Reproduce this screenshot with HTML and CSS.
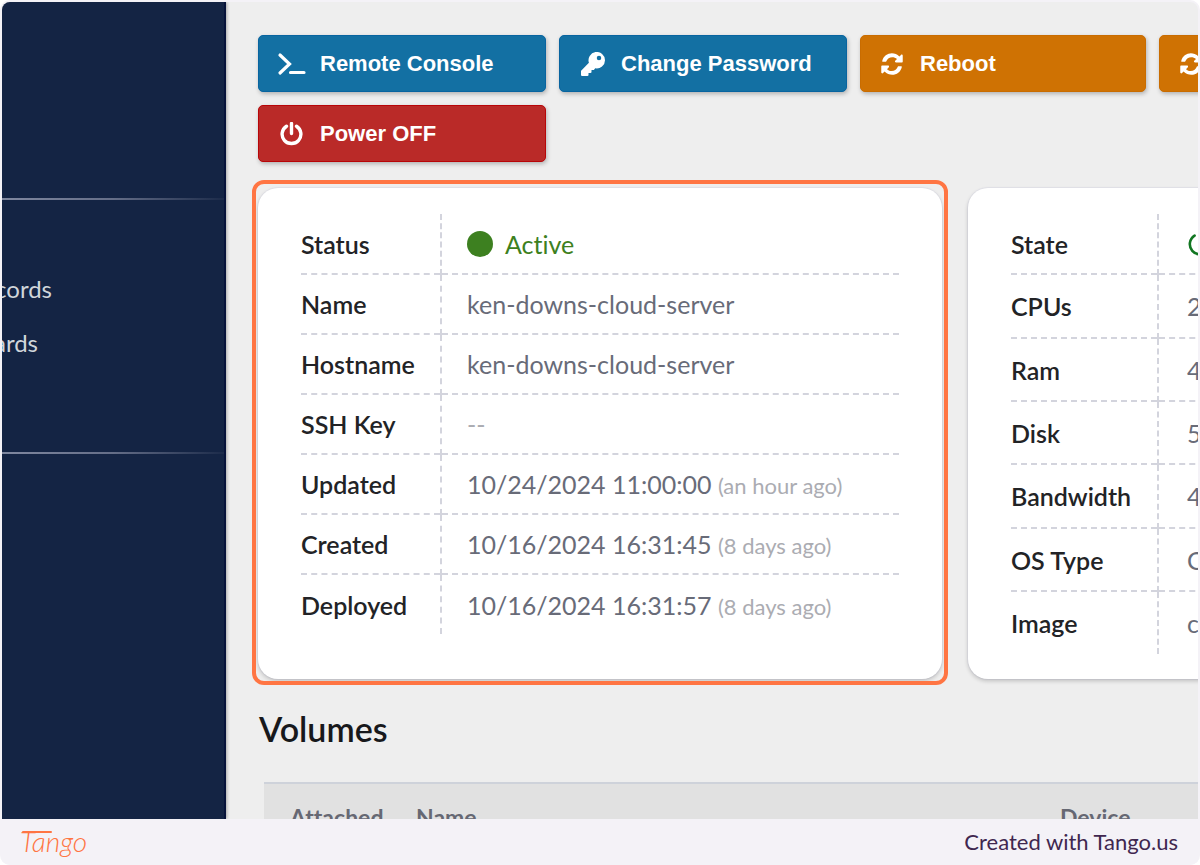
FILE: index.html
```html
<!DOCTYPE html>
<html lang="en">
<head>
<meta charset="utf-8">
<title>Cloud Server</title>
<link rel="stylesheet" href="styles.css">
</head>
<body>
<svg class="defs" aria-hidden="true">
  <symbol id="terminal" viewBox="0 0 24 24" overflow="visible"><path d="M0 3l9.500 9L0 21M10.500 20.500h13.500" fill="none" stroke="currentColor" stroke-width="3.200" stroke-linecap="round" stroke-linejoin="miter"/></symbol>
  <symbol id="key" viewBox="0 0 512 512"><path fill="currentColor" d="M512 176a176 176 0 0 1-209 173l-24 27a24 24 0 0 1-18 8h-37v40a24 24 0 0 1-24 24h-40v40a24 24 0 0 1-24 24H24a24 24 0 0 1-24-24v-78a24 24 0 0 1 7-17l162-162A176 176 0 1 1 512 176zM336 128a48 48 0 1 0 96 0 48 48 0 1 0-96 0z"/></symbol>
  <symbol id="sync" viewBox="-20 -20 552 552"><path fill="currentColor" d="M371 142c-76-72-210-54-248 54-2 6-7 10-13 10H42c-8 0-14-7-12-14C69 3 297-51 426 83l36-36c15-15 41-4 41 17v132c0 14-10 24-24 24H347c-21 0-32-26-17-41zM33 292h132c21 0 32 26 17 41l-41 41c76 72 210 54 248-54 2-6 7-10 13-10h68c8 0 14 7 12 14C443 513 215 563 86 429l-36 36c-15 15-41 4-41-17V316c0-14 10-24 24-24z"/></symbol>
  <symbol id="power" viewBox="0 0 24 24"><path d="M6.500 4.200a9.400 9.400 0 1 0 10 0M11.500 1.500v10" fill="none" stroke="currentColor" stroke-width="3.400" stroke-linecap="round"/></symbol>
  <symbol id="power-thin" viewBox="0 0 24 24"><path d="M7 4.200a9.400 9.400 0 1 0 10 0M12 1v11" fill="none" stroke="currentColor" stroke-width="2.400" stroke-linecap="round"/></symbol>
</svg>
<div class="frame">
  <div class="view">
    <nav class="sidebar" aria-label="Account">
      <hr>
      <div class="links">
        <a href="#records"><span>Records</span></a>
        <a href="#cards"><span>Cards</span></a>
      </div>
      <hr>
    </nav>
    <main>
      <div class="actions">
        <button class="blue" type="button"><svg><use href="#terminal"/></svg>Remote Console</button>
        <button class="blue" type="button"><svg><use href="#key"/></svg>Change Password</button>
        <button class="orange" type="button"><svg><use href="#sync"/></svg>Reboot</button>
        <button class="orange" type="button" aria-label="Restart"><svg><use href="#sync"/></svg></button>
        <button class="red" type="button"><svg><use href="#power"/></svg>Power OFF</button>
      </div>
      <div class="cards">
        <section class="card selected">
          <table class="facts">
            <tr><th scope="row">Status</th><td><span class="active"><i class="dot"></i>Active</span></td></tr>
            <tr><th scope="row">Name</th><td>ken-downs-cloud-server</td></tr>
            <tr><th scope="row">Hostname</th><td>ken-downs-cloud-server</td></tr>
            <tr><th scope="row">SSH Key</th><td><span class="none">--</span></td></tr>
            <tr><th scope="row">Updated</th><td>10/24/2024 11:00:00 <small>(an hour ago)</small></td></tr>
            <tr><th scope="row">Created</th><td>10/16/2024 16:31:45 <small>(8 days ago)</small></td></tr>
            <tr><th scope="row">Deployed</th><td>10/16/2024 16:31:57 <small>(8 days ago)</small></td></tr>
          </table>
        </section>
        <section class="card">
          <table class="facts specs">
            <tr><th scope="row">State</th><td><svg class="on"><use href="#power-thin"/></svg></td></tr>
            <tr><th scope="row">CPUs</th><td>2</td></tr>
            <tr><th scope="row">Ram</th><td>4</td></tr>
            <tr><th scope="row">Disk</th><td>5</td></tr>
            <tr><th scope="row">Bandwidth</th><td>4</td></tr>
            <tr><th scope="row">OS Type</th><td>C</td></tr>
            <tr><th scope="row">Image</th><td>c</td></tr>
          </table>
        </section>
      </div>
      <h2>Volumes</h2>
      <table class="volumes">
        <thead><tr><th class="attached">Attached</th><th class="name">Name</th><th>Device</th></tr></thead>
      </table>
    </main>
  </div>
  <footer>
    <a class="logo" href="#tango">Tango</a>
    <span>Created with Tango.us</span>
  </footer>
</div>
</body>
</html>
```
FILE: styles.css
```css
* { box-sizing: border-box; }
body { margin: 0; background: #fff; font-family: Lato, "Liberation Sans", sans-serif; font-variant-ligatures: none; }
.defs { display: none; }
.frame {
  display: flex;
  flex-direction: column;
  height: 100vh;
  padding: 2px 2px 0;
  overflow: hidden;
  border-radius: 10px;
  background: #f4f2f7;
}
.view {
  display: flex;
  flex: 1;
  min-height: 0;
  overflow: hidden;
  border-radius: 8px 8px 0 0;
  background: #eee;
}

.sidebar {
  flex: 0 0 224px;
  padding-top: 196px;
  background: #142444;
  border-right: 2px solid #07133a;
  box-shadow: 1px 0 3px rgba(0, 0, 0, .3);
}
.sidebar hr {
  height: 2px;
  margin: 0;
  border: 0;
  background: linear-gradient(to right, #8088a0, #656e88 50%, #1c2b4a);
}
.links {
  display: flex;
  flex-direction: column;
  height: 252px;
  padding-top: 62px;
}
.links a {
  display: flex;
  justify-content: flex-end;
  width: 50px;
  height: 54px;
  color: #d0d5da;
  font-size: 24px;
  line-height: 54px;
  text-decoration: none;
}
.links a + a { width: 36px; }

main { flex: 1; min-width: 0; padding: 33px 0 0 32px; overflow: hidden; }
.actions { display: grid; grid-template-columns: 288px 288px 286px 286px; gap: 13px; }
.actions button {
  display: flex;
  align-items: center;
  gap: 16px;
  height: 57px;
  padding: 0 21px;
  border: 1px solid;
  border-radius: 5px;
  color: #fff;
  font: bold 22px "Liberation Sans", sans-serif;
  box-shadow: 1px 2px 4px rgba(0, 0, 0, .25);
}
.actions svg { width: 24px; height: 24px; overflow: visible; }
.actions .blue { background: #1370a3; border-color: #0864a0; }
.actions .orange { padding: 0 19px; background: #cf7203; border-color: #c96c00; }
.actions .red { background: #ba2a28; border-color: #b80508; }

.cards { display: grid; grid-template-columns: 684px 684px; gap: 26px; margin-top: 26px; }
.card {
  position: relative;
  min-height: 491px;
  padding: 26px 43px 24px;
  border-radius: 20px;
  background: #fff;
  box-shadow: 0 2px 4px rgba(0, 0, 0, .2), 0 0 0 1px #e6e6ec;
}
.selected::after {
  content: "";
  position: absolute;
  inset: -8px -6px -6px;
  border: 4px solid #ff7543;
  border-radius: 12px;
}
.facts { width: 100%; border-collapse: collapse; table-layout: fixed; font-size: 25px; }
.facts tr { height: 60px; }
.facts th, .facts td { padding: 0; text-align: left; }
.facts th { width: 140px; border-right: 2px dashed #d3d4dd; color: #222326; font-size: 25px; font-weight: 600; }
.facts td { padding-left: 25px; color: #686b78; white-space: nowrap; }
.facts tr + tr { border-top: 2px dashed #d3d4dd; }
.facts small { color: #abacb2; font-size: 22px; }
.card .specs th { width: 147px; }
.card .specs td { padding-left: 28px; }
.specs tr + tr { height: 63px; }
.specs tr:nth-child(3n + 2) { height: 64px; }
.active { display: flex; align-items: center; gap: 12px; color: #3d8020; }
.dot { width: 26px; height: 26px; border-radius: 50%; background: #3d8020; }
.none { color: #abacb2; }
.on { display: block; width: 26px; height: 26px; color: #127622; }

h2 { margin: 29px 0 0 1px; color: #17181b; font-size: 34px; line-height: 42px; font-weight: 600; }
.volumes {
  width: 1400px;
  margin: 32px 0 0 6px;
  border-collapse: collapse;
  border-top: 2px solid #ced2da;
  background: #e1e1e1;
  table-layout: fixed;
}
.volumes th { height: 66px; padding: 0 0 0 26px; color: #666873; font-size: 23px; font-weight: 700; text-align: left; }
.volumes .attached { width: 126px; }
.volumes .name { width: 644px; }

footer {
  display: flex;
  position: relative;
  flex: 0 0 46px;
  align-items: center;
  justify-content: space-between;
  padding: 0 20px 2px 18px;
  background: #f4f2f7;
  color: #40274f;
  font-size: 22px;
}
.logo { position: relative; color: #ff7543; font-size: 28px; line-height: 36px; font-style: italic; font-weight: 300; text-decoration: none; }
.logo::before {
  content: "";
  position: absolute;
  top: 8px;
  left: 2px;
  width: 30px;
  height: 2px;
  border-radius: 1px;
  background: #ff7543;
}
```
